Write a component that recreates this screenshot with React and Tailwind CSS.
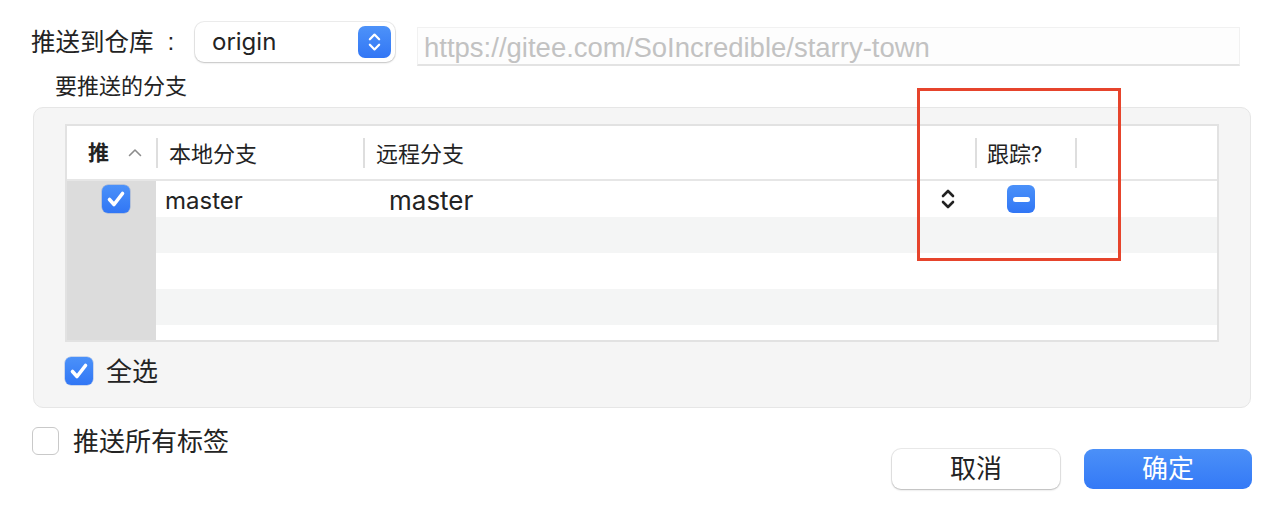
import React from "react";

function CheckBox({ checked }) {
  if (!checked) {
    return (
      <div className="w-[27px] h-[28px] rounded-[6px] bg-white border border-[#c9c9c9] shrink-0" />
    );
  }
  return (
    <div className="w-[28px] h-[28px] rounded-[6px] bg-linear-to-b from-[#4b91f9] to-[#3176f5] flex items-center justify-center shrink-0 shadow-[0_0_0_0.5px_rgba(30,90,200,0.4)]">
      <svg width="28" height="28" viewBox="0 0 28 28">
        <path d="M7.5 14.5 L12 19.5 L20.5 8.5" fill="none" stroke="white" strokeWidth="3.6" strokeLinecap="round" strokeLinejoin="round" />
      </svg>
    </div>
  );
}

function MinusBox() {
  return (
    <div className="w-[28px] h-[28px] rounded-[6px] bg-linear-to-b from-[#4b91f9] to-[#3176f5] flex items-center justify-center shrink-0">
      <div className="w-[17px] h-[5px] rounded-full bg-white" />
    </div>
  );
}

function UpDown({ color = "#222", w = 14, h = 22, sw = 2.6 }) {
  return (
    <svg width={w} height={h} viewBox="0 0 14 22">
      <path d="M2 8 L7 3 L12 8" fill="none" stroke={color} strokeWidth={sw} strokeLinecap="round" strokeLinejoin="round" />
      <path d="M2 14 L7 19 L12 14" fill="none" stroke={color} strokeWidth={sw} strokeLinecap="round" strokeLinejoin="round" />
    </svg>
  );
}

function Sep() {
  return <div className="w-[2px] h-[30px] bg-[#dedede] shrink-0" />;
}

export default function App() {
  return (
    <div className="w-[1272px] h-[528px] bg-white relative overflow-hidden font-['Inter','Noto_Sans_CJK_SC',sans-serif] text-[#232323]">
      {/* top row */}
      <div className="flex items-start pt-[22px] pl-[31px]">
        <div className="h-[40px] w-[164px] flex items-center text-[24.5px] leading-none">
          <span>推送到仓库</span>
          <span className="ml-[14px] font-['Liberation_Sans',sans-serif]">:</span>
        </div>
        <div className="w-[200px] h-[40px] rounded-[9px] bg-white shadow-[0_0_0_1px_rgba(0,0,0,0.07),0_1px_2px_rgba(0,0,0,0.18)] flex items-center justify-between pl-[17px] pr-[4px]">
          <span className="text-[24px] leading-none">origin</span>
          <div className="w-[33px] h-[32px] rounded-[7px] bg-linear-to-b from-[#4d92f9] to-[#3276f5] flex items-center justify-center">
            <UpDown color="white" w={13} h={22} sw={2.4} />
          </div>
        </div>
        <div className="ml-[22px] mt-[5px] w-[823px] h-[39px] bg-[#fdfdfd] border border-[#f1f1f1] border-b-[2px] border-b-[#e3e3e3] flex items-center pl-[6px] pt-[3px]">
          <span className="font-['Liberation_Sans',sans-serif] text-[27.5px] leading-none text-[#c2c2c2]">https://gitee.com/SoIncredible/starry-town</span>
        </div>
      </div>

      <div className="pl-[55px] mt-[9px] text-[22px] leading-[22px]">要推送的分支</div>

      {/* group box */}
      <div className="ml-[33px] mt-[10px] w-[1218px] h-[301px] rounded-[10px] bg-[#f5f5f5] border border-[#e6e6e6] pt-[16px] pl-[31px]">
        <div className="w-[1154px] h-[218px] border-2 border-[#e2e2e2] bg-white flex flex-col">
          {/* header */}
          <div className="h-[55px] border-b-2 border-[#e6e6e6] flex items-center shrink-0">
            <div className="w-[89px] flex items-center pl-[21px]">
              <span className="text-[21px] font-bold leading-none">推</span>
              <svg className="ml-[19px]" width="14" height="9" viewBox="0 0 14 9">
                <path d="M1.5 7.5 L7 2 L12.5 7.5" fill="none" stroke="#8c8c8c" strokeWidth="1.6" strokeLinecap="round" strokeLinejoin="round" />
              </svg>
            </div>
            <Sep />
            <div className="w-[205px] pl-[11px] pt-[2px] text-[22px] leading-none">本地分支</div>
            <Sep />
            <div className="w-[610px] pl-[11px] pt-[2px] text-[22px] leading-none">远程分支</div>
            <Sep />
            <div className="w-[98px] pl-[10px] pt-[2px] text-[22px] leading-none">跟踪?</div>
            <Sep />
          </div>
          {/* rows */}
          <div className="h-[36px] flex shrink-0">
            <div className="w-[89px] bg-[#dcdcdc] flex items-center pl-[35px]">
              <CheckBox checked />
            </div>
            <div className="flex-1 flex items-center bg-white">
              <div className="w-[233px] pl-[9px] pt-[3px] text-[24px] leading-none">master</div>
              <div className="w-[552px] pt-[3px] text-[26px] leading-none">master</div>
              <UpDown />
              <div className="ml-[52px]">
                <MinusBox />
              </div>
            </div>
          </div>
          <div className="h-[36px] flex shrink-0">
            <div className="w-[89px] bg-[#dcdcdc]" />
            <div className="flex-1 bg-[#f4f5f5]" />
          </div>
          <div className="h-[36px] flex shrink-0">
            <div className="w-[89px] bg-[#dcdcdc]" />
            <div className="flex-1 bg-white" />
          </div>
          <div className="h-[36px] flex shrink-0">
            <div className="w-[89px] bg-[#dcdcdc]" />
            <div className="flex-1 bg-[#f4f5f5]" />
          </div>
          <div className="flex-1 flex">
            <div className="w-[89px] bg-[#dcdcdc]" />
            <div className="flex-1 bg-white" />
          </div>
        </div>
        <div className="mt-[15px] flex items-center gap-[13px]">
          <CheckBox checked />
          <span className="text-[26px] leading-none pt-[1px]">全选</span>
        </div>
      </div>

      {/* bottom */}
      <div className="flex justify-between items-start pl-[32px] pr-[20px]">
        <div className="mt-[19px] flex items-center gap-[14px]">
          <CheckBox checked={false} />
          <span className="text-[26px] leading-none pt-[1px]">推送所有标签</span>
        </div>
        <div className="mt-[41px] flex gap-[24px]">
          <div className="w-[168px] h-[40px] rounded-[9px] bg-white shadow-[0_0_0_1px_rgba(0,0,0,0.08),0_1px_2px_rgba(0,0,0,0.22)] flex items-center justify-center text-[26px] leading-none">取消</div>
          <div className="w-[168px] h-[40px] rounded-[9px] bg-linear-to-b from-[#4b90f8] to-[#3479f6] flex items-center justify-center text-[26px] leading-none text-white">确定</div>
        </div>
      </div>

      {/* annotation */}
      <div className="absolute left-[917px] top-[88px] w-[204px] h-[173px] border-[3px] border-[#e6442c]" />
    </div>
  );
}
